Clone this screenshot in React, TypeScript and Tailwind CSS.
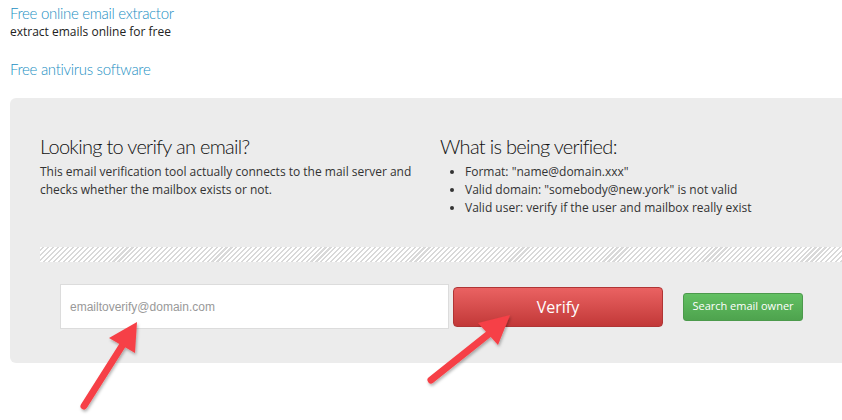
import React from "react";

export default function App() {
  return (
    <div className="relative w-[842px] h-[420px] overflow-hidden bg-white font-['Open_Sans',sans-serif]">
      <div className="pl-[10px] pt-[3px]">
        <a className="block text-[15px] leading-[20px] font-light tracking-[-0.3px] text-[#1b8fc3] font-['Lato',sans-serif]">
          Free online email extractor
        </a>
        <div className="text-[12px] leading-[17px] text-[#222]">extract emails online for free</div>
        <a className="block mt-[19px] text-[15px] leading-[20px] font-light tracking-[-0.3px] text-[#1b8fc3] font-['Lato',sans-serif]">
          Free antivirus software
        </a>
      </div>

      <div className="ml-[10px] mt-[19px] h-[265px] rounded-l-[6px] bg-[#ececec] pl-[30px] pt-[35px]">
        <div className="flex">
          <div className="w-[400px]">
            <h2 className="text-[20px] leading-[27px] font-light tracking-[-0.7px] text-[#111] font-['Lato',sans-serif]">
              Looking to verify an email?
            </h2>
            <p className="mt-[3px] text-[12px] leading-[18px] text-[#333]">
              This email verification tool actually connects to the mail server and
              <br />
              checks whether the mailbox exists or not.
            </p>
          </div>
          <div>
            <h2 className="text-[20px] leading-[27px] font-light tracking-[-0.7px] text-[#111] font-['Lato',sans-serif]">
              What is being verified:
            </h2>
            <ul className="mt-[3px] pl-[25px] list-disc text-[12px] leading-[18px] text-[#333]">
              <li>Format: "name@domain.xxx"</li>
              <li>Valid domain: "somebody@new.york" is not valid</li>
              <li>Valid user: verify if the user and mailbox really exist</li>
            </ul>
          </div>
        </div>

        <div className="mt-[30px] h-[15px] bg-[repeating-linear-gradient(135deg,#ffffff_0px,#ffffff_2px,#d9d9d9_2px,#d9d9d9_3.5px)]" />

        <div className="flex items-center pl-[20px] mt-[22px]">
          <div className="w-[389px] h-[45px] bg-white border border-[#dcdcdc] flex items-center pl-[9px]">
            <span className="text-[12px] text-[#999] font-['Liberation_Sans',Arial,sans-serif]">
              emailtoverify@domain.com
            </span>
          </div>
          <button className="ml-[4px] w-[210px] h-[40px] rounded-[4px] border border-[#b03535] bg-gradient-to-b from-[#ea6262] to-[#c23838] text-white text-[16px]">
            Verify
          </button>
          <button className="ml-[20px] w-[120px] h-[28px] rounded-[3px] border border-[#4c9a4c] bg-gradient-to-b from-[#62c062] to-[#4ea34e] text-white text-[11px]">
            Search email owner
          </button>
        </div>
      </div>

      <svg className="absolute left-0 top-0 pointer-events-none" width="842" height="420">
        <defs>
          <filter id="sh" x="-20%" y="-20%" width="140%" height="140%">
            <feDropShadow dx="1" dy="2" stdDeviation="1.5" floodColor="#000" floodOpacity="0.3" />
          </filter>
        </defs>
        <g filter="url(#sh)">
          <line x1="84" y1="406" x2="122" y2="346" stroke="#f64146" strokeWidth="7" strokeLinecap="round" />
          <polygon points="137,322 109,338 135,353" fill="#f64146" />
        </g>
        <g filter="url(#sh)">
          <line x1="431" y1="380" x2="490" y2="333" stroke="#f64146" strokeWidth="7" strokeLinecap="round" />
          <polygon points="510,315 478,323 498,345" fill="#f64146" />
        </g>
      </svg>
    </div>
  );
}
